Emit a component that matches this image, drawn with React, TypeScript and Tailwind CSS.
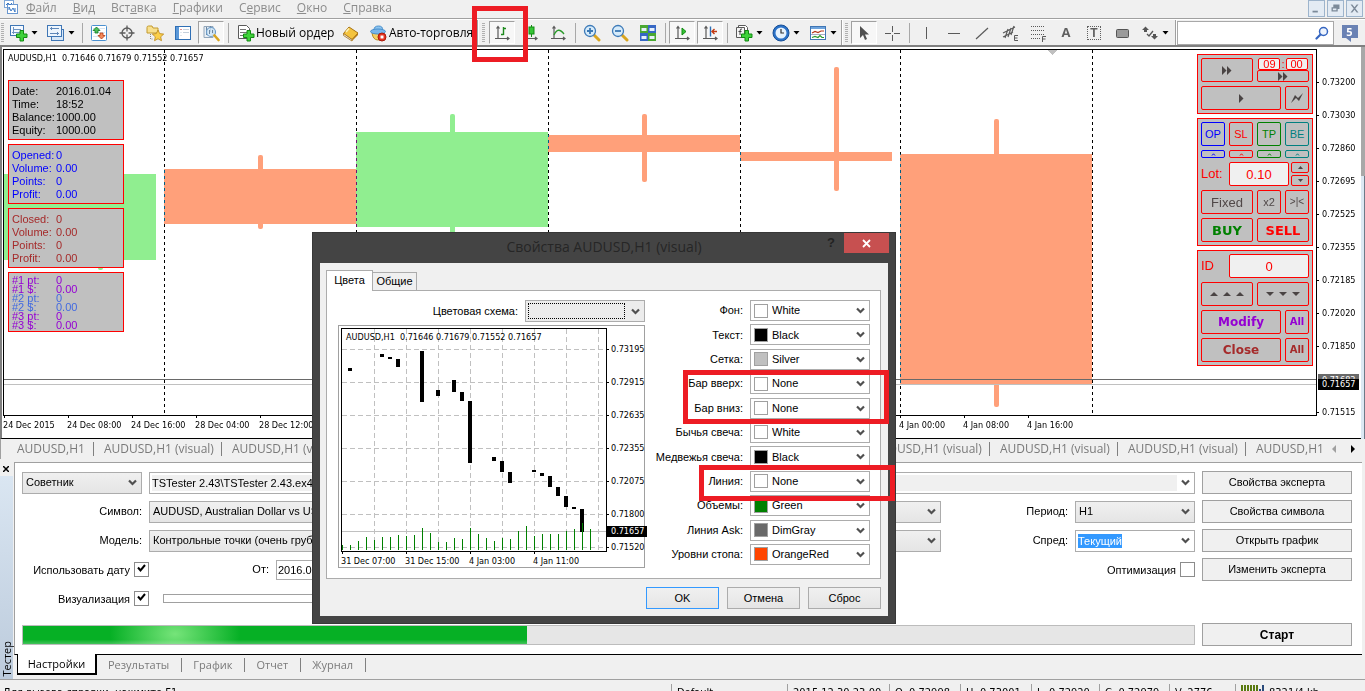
import { useState } from "react";
import type { ReactNode } from "react";
import clsx from "clsx";

const TAHOMA = "font-['DejaVu_Sans_Condensed','DejaVu_Sans',sans-serif]";
const SEGOE = "font-['Open_Sans','Noto_Sans',sans-serif]";
const SANS = "font-['Liberation_Sans',sans-serif]";

/* ---------- small shared pieces ---------- */

function Chevron() {
  return (
    <svg width="9" height="7" viewBox="0 0 9 7" className="pointer-events-none shrink-0">
      <path d="M1 1.500L4.500 5 8 1.500" fill="none" stroke="#505050" strokeWidth="2.200" />
    </svg>
  );
}

function Caret() {
  return (
    <svg width="7" height="4" viewBox="0 0 7 4" className="shrink-0">
      <path d="M0.500 0h6L3.500 3.500Z" fill="#000" />
    </svg>
  );
}

interface ComboProps {
  id: string;
  value: string;
  className?: string;
}

function Combo({ id, value, className }: ComboProps) {
  return (
    <span
      className={clsx(
        "relative flex h-[22px] items-center border border-[#acacac] bg-linear-to-b from-[#f0f0f0] to-[#e5e5e5]",
        className,
      )}
    >
      <select id={id} className="h-full w-full appearance-none truncate bg-transparent pl-[3px] pr-5 outline-none">
        <option>{value}</option>
      </select>
      <span className="pointer-events-none absolute right-1 flex">
        <Chevron />
      </span>
    </span>
  );
}

/* ---------- menu ---------- */

const MENU = [
  ["", "Ф", "айл"],
  ["", "В", "ид"],
  ["Вст", "а", "вка"],
  ["", "Г", "рафики"],
  ["С", "е", "рвис"],
  ["", "О", "кно"],
  ["", "С", "правка"],
];

function MenuBar() {
  return (
    <nav className={`flex h-[19px] shrink-0 items-start border-b border-[#a0a0a0] pl-1 text-[12px] leading-4 text-[#8c8c8c] ${SEGOE}`}>
      <svg width="14" height="14" viewBox="0 0 14 14" className="shrink-0">
        <rect x="0.500" y="0.500" width="9" height="7" fill="#fff" stroke="#7fa6d6" />
        <rect x="3.500" y="4.500" width="10" height="9" fill="#fff" stroke="#6a97cf" />
        <path d="M2 5l2-2 2 2 2-2M5 10V7l2 4 2-3 2 4V8" fill="none" stroke="#3b78c4" />
      </svg>
      {MENU.map(([a, b, c]) => (
        <button key={b + c} className="px-2">
          {a}
          <u>{b}</u>
          {c}
        </button>
      ))}
      <div className="ml-auto flex gap-[2px] pr-[2px]">
        {["M4 11h6v2H4Z", "M6 4h7v5h-2v3H4V7h2ZM5.500 8.500v2h4v-2Z", "M4 4h2l2.500 3L11 4h2l-3.500 4.500L13 13h-2L8.500 10 6 13H4l3.500-4.500Z"].map(
          (d, i) => (
            <button
              key={d}
              aria-label={["Свернуть", "Восстановить", "Закрыть"][i]}
              className="flex h-[17px] w-[17px] items-center justify-center border border-[#9db4cc] bg-[#e3ebf4]"
            >
              <svg width="15" height="15" viewBox="0 0 17 17">
                <path d={d} fill="#7c8a99" fillRule="evenodd" />
              </svg>
            </button>
          ),
        )}
      </div>
    </nav>
  );
}

/* ---------- toolbar ---------- */

function Ico({ children }: { children: ReactNode }) {
  return (
    <svg width="18" height="18" viewBox="0 0 18 18" className="shrink-0">
      {children}
    </svg>
  );
}

function Tool({ label, pressed, children }: { label: string; pressed?: boolean; children: ReactNode }) {
  return (
    <button aria-label={label} title={label} className="flex h-[25px] w-7 shrink-0 items-center justify-center">
      <span
        className={clsx(
          "flex h-[23px] w-[26px] items-center justify-center",
          pressed && "border border-b-white border-l-[#a0a0a0] border-r-white border-t-[#a0a0a0] bg-[#f7f7f7]",
        )}
      >
        {children}
      </span>
    </button>
  );
}

function DropTool({ label, children }: { label: string; children: ReactNode }) {
  return (
    <button aria-label={label} title={label} className="flex h-[25px] w-[37px] shrink-0 items-center gap-[3px] pl-[5px]">
      {children}
      <Caret />
    </button>
  );
}

function Sep() {
  return (
    <span className="flex w-[6px] shrink-0 justify-center">
      <span className="h-5 w-px bg-[#a8a8a8]" />
    </span>
  );
}

function Grip({ className }: { className: string }) {
  return (
    <span className={clsx("flex shrink-0 justify-center", className)}>
      <span className="h-5 w-[3px] bg-[repeating-linear-gradient(to_bottom,#b0b0b0_0_1px,transparent_1px_2px)]" />
    </span>
  );
}

function Axes() {
  return <path d="M5 2.500V14.500M2 14.500H16M3.500 4.500L5 2.500 6.500 4.500M14 13L16 14.500 14 16" fill="none" stroke="#5a5a5a" strokeWidth="1.200" />;
}

function Plus({ x, y }: { x: number; y: number }) {
  return (
    <path
      transform={`translate(${x} ${y})`}
      d="M4 0.500h3.500v3.500h3.500v3.500h-3.500v3.500h-3.500v-3.500h-3.500v-3.500h3.500Z"
      fill="#3fd23a"
      stroke="#128a12"
    />
  );
}

function Magnifier({ plus }: { plus: boolean }) {
  return (
    <Ico>
      <path d="M11 11l5 5" stroke="#d9a520" strokeWidth="3" strokeLinecap="round" />
      <circle cx="7" cy="7" r="5.500" fill="#d6ebfa" stroke="#3d7ab8" strokeWidth="1.300" />
      <path d={plus ? "M4 7h6M7 4v6" : "M4 7h6"} stroke="#3a78b4" strokeWidth="1.800" />
    </Ico>
  );
}

function Toolbar() {
  return (
    <div className={`flex h-7 shrink-0 items-center border-b-2 border-b-[#808080] border-t border-t-white text-[12px] text-black ${SEGOE}`}>
      <Grip className="w-[5px]" />
      <DropTool label="Новый график">
        <Ico>
          <rect x="0.500" y="1.500" width="13" height="10" fill="#f4f9ff" stroke="#3f76b5" />
          <path d="M3.500 3v7M2 8.500h10M3 5.500h8" stroke="#6d94c2" />
          <Plus x={6} y={6} />
        </Ico>
      </DropTool>
      <DropTool label="Профили">
        <Ico>
          <rect x="4.500" y="5.500" width="12" height="11" fill="#d7e7f7" stroke="#3f76b5" />
          <rect x="0.500" y="1.500" width="14" height="11" fill="#edf5fd" stroke="#3f76b5" />
          <path d="M3 4.500h9M4.500 3v3M3 9.500h9M10.500 8v3" stroke="#5f87b8" />
        </Ico>
      </DropTool>
      <Sep />
      <Tool label="Обзор рынка">
        <Ico>
          <rect x="1.500" y="1.500" width="15" height="15" rx="1" fill="#fff" stroke="#4a90d0" />
          <path d="M3 4.500h12M3 8.500h12M3 12.500h12" stroke="#d6e4f0" />
          <path d="M6.500 3l3.500 3.500H8V9H5V6.500H3Z" fill="#4fbf5b" stroke="#0f7a22" strokeWidth="0.800" />
          <path d="M11.500 15l3.500-3.500H13V9h-3v2.500H8Z" fill="#f28a5c" stroke="#b83a12" strokeWidth="0.800" />
        </Ico>
      </Tool>
      <Tool label="Окно данных">
        <Ico>
          <circle cx="9" cy="9" r="5" fill="none" stroke="#5a5a5a" strokeWidth="1.300" />
          <path d="M9 1.500v6M9 10.500v6M1.500 9h6M10.500 9h6" stroke="#5a5a5a" strokeWidth="1.300" />
        </Ico>
      </Tool>
      <Tool label="Навигатор">
        <Ico>
          <path d="M1 3.500q0-1.500 1.500-1.500H6l1 2h5v5H1Z" fill="#f8e08e" stroke="#c39a2e" />
          <path d="M4.500 10v5h3" fill="none" stroke="#888" strokeDasharray="1 1" />
          <path d="M12 6l1.700 3.600 4 .5-3 2.700.8 3.900L12 14.800l-3.500 1.900.8-3.900-3-2.700 4-.5Z" fill="#fbcf4a" stroke="#b9861b" strokeWidth="0.800" />
        </Ico>
      </Tool>
      <Tool label="Терминал">
        <Ico>
          <rect x="1.500" y="2.500" width="15" height="13" fill="#fff" stroke="#2f6fb5" />
          <rect x="2" y="3" width="3" height="12" fill="#5b98d8" />
          <path d="M6.500 5.500h1M9 5.500h6M6.500 8.500h1M9 8.500h6M6.500 11.500h1" stroke="#c4d0dc" />
          <path d="M6.500 5.500h1" stroke="#d33" />
        </Ico>
      </Tool>
      <Tool label="Тестер стратегий" pressed>
        <Ico>
          <path d="M2 2.500h9v11H2Z" fill="#e9eff5" stroke="#92a6ba" />
          <path d="M4.500 3v8M8.500 2v6" stroke="#6c86a0" />
          <circle cx="9" cy="8" r="4.500" fill="#cfe6f8" fillOpacity="0.800" stroke="#6d9cc8" strokeWidth="1.200" />
          <path d="M7.500 6v4M10.500 6v3" stroke="#6c86a0" />
          <path d="M12.500 11.500l4 4.500" stroke="#d9a520" strokeWidth="2.600" strokeLinecap="round" />
        </Ico>
      </Tool>
      <Sep />
      <button className="flex h-[25px] w-[106px] shrink-0 items-center gap-px whitespace-nowrap pl-[6px]">
        <Ico>
          <path d="M1.500 1.500h8l3 3v10h-11Z" fill="#fff" stroke="#5a5a5a" />
          <path d="M3 5.500h6M3 8.500h7M3 11.500h4" stroke="#777" />
          <Plus x={6} y={6} />
        </Ico>
        Новый ордер
      </button>
      <Tool label="MetaEditor">
        <Ico>
          <path d="M1.500 9.500L7 3l9 6-6 6.500Z" fill="#f4c33e" stroke="#a87415" />
          <path d="M1.500 9.500v2L10 17v-1.500Z" fill="#e6e6e6" stroke="#a87415" strokeWidth="0.800" />
          <path d="M10 17l6-6v-2l-6 6.500Z" fill="#b57a14" />
          <path d="M7 4.500L4 8" stroke="#fff3b8" strokeWidth="1.500" />
        </Ico>
      </Tool>
      <button className="flex h-[25px] w-[112px] shrink-0 items-center gap-[2px] whitespace-nowrap pl-1">
        <Ico>
          <path d="M3 9q1 7 6 7t6-7Z" fill="#f5cf62" stroke="#b98a21" />
          <path d="M5 6q0-4 4.500-4t4 4Z" fill="#8cc4f0" stroke="#4a90cc" />
          <ellipse cx="9" cy="7.500" rx="7.500" ry="2.500" fill="#79b6ea" stroke="#4a90cc" />
          <circle cx="13" cy="13" r="4" fill="#e5321e" stroke="#a81c0c" />
          <rect x="11.500" y="11.500" width="3" height="3" fill="#fff" />
        </Ico>
        Авто-торговля
      </button>
      <span className="h-[25px] w-[2px] shrink-0 border-l border-[#a0a0a0] bg-white" />
      <Grip className="w-[9px]" />
      <Tool label="Бары" pressed>
        <Ico>
          <Axes />
          <path d="M10.500 3v8M10.500 4.500h2.500M8 10.500h2.500" stroke="#1d8a1d" strokeWidth="1.400" />
        </Ico>
      </Tool>
      <Tool label="Свечи">
        <Ico>
          <Axes />
          <path d="M10.500 1v12" stroke="#128a12" />
          <rect x="8" y="3" width="5" height="7" fill="#35c435" stroke="#128a12" />
        </Ico>
      </Tool>
      <Tool label="Линия">
        <Ico>
          <Axes />
          <path d="M5 11q4-9 10-1" fill="none" stroke="#2a9a2a" strokeWidth="1.300" />
        </Ico>
      </Tool>
      <Sep />
      <Tool label="Увеличить">
        <Magnifier plus />
      </Tool>
      <Tool label="Уменьшить">
        <Magnifier plus={false} />
      </Tool>
      <Tool label="Расположить окна">
        <Ico>
          <rect x="1" y="1" width="8" height="8" fill="#4aa832" />
          <rect x="9" y="1" width="8" height="8" fill="#3667c4" />
          <rect x="1" y="9" width="8" height="8" fill="#3667c4" />
          <rect x="9" y="9" width="8" height="8" fill="#4aa832" />
          <path d="M2.500 4h5v3h-5ZM10.500 4h5v3h-5ZM2.500 12h5v3h-5ZM10.500 12h5v3h-5Z" fill="#e6f0fb" />
        </Ico>
      </Tool>
      <Sep />
      <Tool label="Автопрокрутка" pressed>
        <Ico>
          <Axes />
          <path d="M9 4l4 3.500L9 11Z" fill="#35c435" stroke="#128a12" />
        </Ico>
      </Tool>
      <Tool label="Сдвиг графика" pressed>
        <Ico>
          <Axes />
          <path d="M9.500 2.500v10" stroke="#2e6fb5" strokeWidth="1.400" />
          <path d="M11 7.500h5M13.500 5L11 7.500l2.500 2.500" fill="none" stroke="#c23a12" strokeWidth="1.400" />
        </Ico>
      </Tool>
      <Sep />
      <DropTool label="Индикаторы">
        <Ico>
          <path d="M3.500 1.500h7l2 2v9h-9Z" fill="#fff" stroke="#5a5a5a" />
          <path d="M1.500 3.500h8v10h-8Z" fill="#f4f4f4" stroke="#5a5a5a" />
          <path d="M7 5q-2-.5-2 2v4M3.500 7.500h3" fill="none" stroke="#444" />
          <Plus x={6} y={6} />
        </Ico>
      </DropTool>
      <DropTool label="Периоды">
        <Ico>
          <circle cx="9" cy="9" r="8" fill="#2b72c8" stroke="#174f96" />
          <circle cx="9" cy="9" r="5.500" fill="#e6f2fd" />
          <path d="M9 5v4h3" fill="none" stroke="#333" strokeWidth="1.200" />
        </Ico>
      </DropTool>
      <DropTool label="Шаблоны">
        <Ico>
          <rect x="1.500" y="2.500" width="15" height="13" fill="#fff" stroke="#3f76b5" />
          <rect x="2" y="3" width="14" height="2" fill="#6ea3dc" />
          <path d="M3 9l3-1.500 3 1 3-1.500h3" fill="none" stroke="#b5371a" strokeWidth="1.200" />
          <path d="M2 10.500h14" stroke="#88a" strokeWidth="0.700" />
          <path d="M3 13.500l3-1 3 1 2-2 2 2h2" fill="none" stroke="#2a9a2a" strokeWidth="1.200" />
        </Ico>
      </DropTool>
      <span className="h-[25px] w-[2px] shrink-0 border-l border-[#a0a0a0] bg-white" />
      <Grip className="w-[7px]" />
      <Tool label="Курсор" pressed>
        <Ico>
          <path d="M5 2v12l3-3 2 5 2-1-2-4.500h4Z" fill="#505050" />
        </Ico>
      </Tool>
      <Tool label="Перекрестие">
        <Ico>
          <path d="M9.500 2v6M9.500 11v6M2 9.500h6M11 9.500h6" stroke="#5a5a5a" />
        </Ico>
      </Tool>
      <Sep />
      <Tool label="Вертикальная линия">
        <Ico>
          <path d="M9.500 3v12" stroke="#5a5a5a" />
        </Ico>
      </Tool>
      <Tool label="Горизонтальная линия">
        <Ico>
          <path d="M3 9.500h12" stroke="#5a5a5a" />
        </Ico>
      </Tool>
      <Tool label="Трендовая линия">
        <Ico>
          <path d="M3 15L15 4" stroke="#5a5a5a" strokeWidth="1.200" />
        </Ico>
      </Tool>
      <Tool label="Канал">
        <Ico>
          <path d="M2 9L14 3M2 13l10-5M4 14L7 5M7 13l3-9M10 11l3-9" stroke="#5a5a5a" strokeWidth="1.200" />
          <path d="M17 11.500h-3.500v5H17M13.500 14H16.500" fill="none" stroke="#5a5a5a" />
        </Ico>
      </Tool>
      <Tool label="Фибоначчи">
        <Ico>
          <path d="M2 2.500h14M2 6.500h14M2 10.500h14M2 14.500h9" stroke="#5a5a5a" strokeDasharray="1 1" />
          <path d="M17 12.500h-3.500V18M13.500 15H16.500" fill="none" stroke="#5a5a5a" />
        </Ico>
      </Tool>
      <Tool label="Текст">
        <span className="text-[13px] font-bold leading-none text-[#606060]">A</span>
      </Tool>
      <Tool label="Метка">
        <span className="flex h-[14px] w-[14px] items-center justify-center border border-dotted border-[#606060] font-['Liberation_Sans',sans-serif] text-[12px] font-bold leading-none text-[#606060]">
          T
        </span>
      </Tool>
      <Tool label="Прямоугольник">
        <Ico>
          <rect x="3.500" y="5.500" width="12" height="8" rx="1" fill="#9a9a9a" stroke="#555" />
        </Ico>
      </Tool>
      <DropTool label="Стрелки">
        <Ico>
          <path d="M1 6l3.500-3.500L8 6H6v2H3V6ZM10 12h2v-2h3v2h2l-3.500 3.500Z" fill="#555" />
          <path d="M6 10l2 2 4-5" fill="none" stroke="#555" strokeWidth="1.300" />
        </Ico>
      </DropTool>
      <span className="ml-[2px] h-[25px] w-[2px] shrink-0 border-l border-[#a0a0a0] bg-white" />
      <label className="flex h-6 min-w-0 flex-1 items-center border border-[#a8a8a8] bg-white">
        <input aria-label="Поиск" className="h-full min-w-0 flex-1 outline-none" />
        <svg width="14" height="14" viewBox="0 0 14 14" className="mr-1 shrink-0">
          <circle cx="8.500" cy="5.500" r="4" fill="#eef4fd" stroke="#3565c0" strokeWidth="1.500" />
          <path d="M5.500 8.500L1.500 12.500" stroke="#3565c0" strokeWidth="2.200" strokeLinecap="round" />
        </svg>
      </label>
      <button aria-label="Сообщения" className="flex h-6 w-[31px] shrink-0 items-start justify-center pt-1">
        <span className="relative h-[13px] w-4 bg-[#6a82b4] text-center text-[11px] font-bold leading-[13px] text-white">
          5
          <svg width="5" height="4" viewBox="0 0 5 4" className="absolute left-1 top-[13px]">
            <path d="M0 0h5v4Z" fill="#6a82b4" />
          </svg>
        </span>
      </button>
    </div>
  );
}

/* ---------- main chart ---------- */

const GREEN = "#90ee90";
const SALMON = "#ffa07a";

// x, width, body top, body bottom, wick x, wick top, wick bottom
const CANDLES: [number, number, number, number, number, number, number, string][] = [
  [0, 156, 174, 260, 98, 174, 270, GREEN],
  [164, 192, 169, 224, 258, 155, 229, SALMON],
  [356, 192, 132, 227, 450, 114, 240, GREEN],
  [548, 192, 135, 152, 642, 114, 182, SALMON],
  [740, 152, 152, 161, 834, 67, 191, SALMON],
  [900, 192, 154, 384, 994, 119, 407, SALMON],
];

const DAY_LINES = [164, 356, 548, 740, 900, 1092];

const TIMES = [
  "24 Dec 2015", "24 Dec 08:00", "24 Dec 16:00", "28 Dec 04:00", "28 Dec 12:00", "28 Dec 20:00",
  "29 Dec 04:00", "29 Dec 12:00", "29 Dec 20:00", "30 Dec 04:00", "30 Dec 12:00", "30 Dec 20:00",
  "31 Dec 04:00", "31 Dec 12:00", "4 Jan 00:00", "4 Jan 08:00", "4 Jan 16:00",
];

const PRICES = ["0.73200", "0.73030", "0.72860", "0.72695", "0.72525", "0.72355", "0.72185", "0.72020", "0.71850", "", "0.71515"];

function InfoBox({ rows, color, dense }: { rows: [string, string, string?][]; color: string; dense?: boolean }) {
  return (
    <dl
      className={clsx(
        "h-[60px] w-[116px] border border-[red] bg-[#c0c0c0] pl-[3px] text-[11px]",
        dense ? "pt-[3px] leading-[9px]" : "pt-1 leading-[13px]",
        color,
      )}
    >
      {rows.map(([label, value, tone], i) => (
        <div key={i} className={clsx("flex", tone)}>
          <dt className="w-11 shrink-0 whitespace-nowrap">{label}</dt>
          <dd>{value}</dd>
        </div>
      ))}
    </dl>
  );
}

function Btn({ children, className, label }: { children: ReactNode; className?: string; label?: string }) {
  return (
    <button
      aria-label={label}
      className={clsx("flex shrink-0 items-center justify-center whitespace-nowrap rounded-[2px] border leading-none", className)}
    >
      {children}
    </button>
  );
}

function Tri({ d, w = 9, h = 9 }: { d: string; w?: number; h?: number }) {
  return (
    <svg width={w} height={h} viewBox={`0 0 ${w} ${h}`}>
      <path d={d} fill="#4a4444" />
    </svg>
  );
}

function Hat() {
  return (
    <svg width="5" height="3" viewBox="0 0 5 3">
      <path d="M1 2.500L2.500 0.800 4 2.500" fill="none" stroke="currentColor" />
    </svg>
  );
}

const FF = "M0 0l4.500 4.500L0 9ZM5 0l4.500 4.500L5 9Z";
const UP = "M0 4L4 0l4 4Z";
const DOWN = "M0 0h8L4 4Z";

function TradePanel() {
  const box = "flex w-[116px] flex-col gap-1 border border-[red] bg-[#c0c0c0] p-[3px]";
  return (
    <div className={`absolute right-[3px] top-1 flex flex-col gap-1 text-[red] ${SANS}`}>
      <div className={box}>
        <div className="flex gap-1">
          <Btn label="Быстрее" className="h-6 w-[52px] border-[red]">
            <Tri d={FF} w={10} />
          </Btn>
          <div className="flex w-[52px] flex-col">
            <div className="flex h-3 items-center justify-center gap-px text-[11px] leading-none">
              <input aria-label="Часы" defaultValue="09" className="h-3 w-[22px] rounded-[2px] border border-[red] bg-[#f0f0f0] text-center" />
              <span>:</span>
              <input aria-label="Минуты" defaultValue="00" className="h-3 w-[22px] rounded-[2px] border border-[red] bg-[#f0f0f0] text-center" />
            </div>
            <Btn label="До времени" className="h-3 border-[red]">
              <Tri d={FF} w={10} />
            </Btn>
          </div>
        </div>
        <div className="flex gap-1">
          <Btn label="Пуск" className="h-6 w-20 border-[red]">
            <Tri d="M0 0l4.500 4.500L0 9Z" w={5} />
          </Btn>
          <Btn label="Тик" className="h-6 w-6 border-[red]">
            <Tri d="M0 10L4 2l3 3L12 0 8 8 5 5Z" w={12} h={10} />
          </Btn>
        </div>
      </div>

      <div className={box}>
        <div className="flex gap-1 text-[11px]">
          <Btn className="h-6 w-6 border-[blue] text-[blue]">OP</Btn>
          <Btn className="h-6 w-6 border-[red] text-[red]">SL</Btn>
          <Btn className="h-6 w-6 border-[green] text-[green]">TP</Btn>
          <Btn className="h-6 w-6 border-[teal] text-[teal]">BE</Btn>
        </div>
        <div className="flex gap-1">
          <Btn label="OP вверх" className="h-2 w-6 border-[blue] text-[blue]"><Hat /></Btn>
          <Btn label="SL вверх" className="h-2 w-6 border-[red] text-[red]"><Hat /></Btn>
          <Btn label="TP вверх" className="h-2 w-6 border-[green] text-[green]"><Hat /></Btn>
          <Btn label="BE вверх" className="h-2 w-6 border-[teal] text-[teal]"><Hat /></Btn>
        </div>
        <div className="flex h-6 items-center">
          <label htmlFor="lot" className="w-7 text-[13px]">Lot:</label>
          <input id="lot" defaultValue="0.10" className="h-6 w-[60px] rounded-[2px] border border-[red] bg-[#f0f0f0] text-center text-[13px]" />
          <div className="ml-auto flex flex-col gap-[2px]">
            <Btn label="Больше" className="h-[11px] w-[18px] border-[red]">
              <Tri d="M0 3L2.500 0 5 3Z" w={5} h={3} />
            </Btn>
            <Btn label="Меньше" className="h-[11px] w-[18px] border-[red]">
              <Tri d="M0 0h5L2.500 3Z" w={5} h={3} />
            </Btn>
          </div>
        </div>
        <div className="flex gap-1 text-[#504848]">
          <Btn className="h-6 w-[52px] border-[red] text-[13px]">Fixed</Btn>
          <Btn className="h-6 w-6 border-[red] text-[11px]">x2</Btn>
          <Btn className="h-6 w-6 border-[red] text-[10px]">&gt;|&lt;</Btn>
        </div>
        <div className="flex gap-1 font-['DejaVu_Sans',sans-serif] text-[13px] font-bold">
          <Btn className="h-6 w-[52px] border-[red] text-[green]">BUY</Btn>
          <Btn className="h-6 w-[52px] border-[red] text-[red]">SELL</Btn>
        </div>
      </div>

      <div className={box}>
        <div className="flex items-center">
          <label htmlFor="order-id" className="w-7 text-[13px]">ID</label>
          <input id="order-id" defaultValue="0" className="h-6 w-20 rounded-[2px] border border-[red] bg-[#f0f0f0] text-center text-[13px]" />
        </div>
        <div className="flex gap-1">
          <Btn label="Вверх" className="h-6 w-[52px] gap-[5px] border-[red]">
            {[0, 1, 2].map((i) => <Tri key={i} d={UP} w={8} h={4} />)}
          </Btn>
          <Btn label="Вниз" className="h-6 w-[52px] gap-[5px] border-[red]">
            {[0, 1, 2].map((i) => <Tri key={i} d={DOWN} w={8} h={4} />)}
          </Btn>
        </div>
        <div className="flex gap-1 font-['DejaVu_Sans',sans-serif] font-bold text-[#9400d3]">
          <Btn className="h-6 w-20 border-[red] text-[12px]">Modify</Btn>
          <Btn className="h-6 w-6 border-[red] text-[10px]">All</Btn>
        </div>
        <div className="flex gap-1 font-['DejaVu_Sans',sans-serif] font-bold text-[brown]">
          <Btn className="h-6 w-20 border-[red] text-[12px]">Close</Btn>
          <Btn className="h-6 w-6 border-[red] text-[10px]">All</Btn>
        </div>
      </div>
    </div>
  );
}

function Chart() {
  return (
    <div className="flex h-[392px] shrink-0">
      <section className="flex min-w-0 flex-1 flex-col border-b border-l-2 border-b-black border-l-[#808080] bg-white pl-px pt-[2px]">
        <div className="flex h-[367px]">
          <div className="relative min-w-0 flex-1 overflow-hidden border border-black">
            <svg width="100%" height="100%" className="absolute inset-0" shapeRendering="crispEdges">
              <rect width="100%" height="100%" fill="#fff" />
              <g transform="translate(-4 -50)">
                {CANDLES.map(([x, w, top, bottom, wx, wTop, wBottom, fill]) => (
                  <g key={x} fill={fill}>
                    <rect x={x} y={top} width={w} height={bottom - top} />
                    <rect x={wx} y={wTop} width="5" height={wBottom - wTop} rx="2" shapeRendering="auto" />
                  </g>
                ))}
                <path d="M1047 50h10l-5 5Z" fill="#c0c0c0" />
                <path d="M0 379.500H1400" stroke="#696969" />
                <path d="M0 384.500H1400" stroke="#c0c0c0" />
                {DAY_LINES.map((x) => (
                  <path key={x} d={`M${x}.5 50V415`} stroke="#fff" strokeDasharray="3 3" className="mix-blend-difference" />
                ))}
              </g>
            </svg>
            <p className={`absolute left-1 top-px text-[9px] leading-[14px] ${TAHOMA}`}>
              AUDUSD,H1&nbsp; 0.71646 0.71679 0.71552 0.71657
            </p>
            <div className={`absolute left-1 top-[30px] flex flex-col gap-1 ${SANS}`}>
              <InfoBox
                color="text-black"
                rows={[["Date:", "2016.01.04"], ["Time:", "18:52"], ["Balance:", "1000.00"], ["Equity:", "1000.00"]]}
              />
              <InfoBox
                color="text-[blue]"
                rows={[["Opened:", "0"], ["Volume:", "0.00"], ["Points:", "0"], ["Profit:", "0.00"]]}
              />
              <InfoBox
                color="text-[brown]"
                rows={[["Closed:", "0"], ["Volume:", "0.00"], ["Points:", "0"], ["Profit:", "0.00"]]}
              />
              <InfoBox
                dense
                color="text-[#9400d3]"
                rows={[
                  ["#1 pt:", "0"],
                  ["#1 $:", "0.00"],
                  ["#2 pt:", "0", "text-[#4169e1]"],
                  ["#2 $:", "0.00", "text-[#4169e1]"],
                  ["#3 pt:", "0"],
                  ["#3 $:", "0.00"],
                ]}
              />
            </div>
            <TradePanel />
          </div>
          <div className={`relative w-11 shrink-0 pt-[17px] text-[9px] ${TAHOMA}`}>
            {PRICES.map((p, i) => (
              <div key={i} className="flex h-[33px] items-center gap-[3px]">
                {p && <span className="h-px w-[2px] bg-black" />}
                {p}
              </div>
            ))}
            <span className="absolute left-px right-[2px] top-[325px] h-3 bg-[#696969] pl-1 leading-3 text-white">0.71683</span>
            <span className="absolute left-px right-[2px] top-[330px] h-[11px] bg-black pl-1 leading-[11px] text-white">0.71657</span>
          </div>
        </div>
        <div className={`flex flex-1 overflow-hidden text-[9px] leading-[14px] ${TAHOMA}`}>
          {TIMES.map((t) => (
            <div key={t} className="w-16 shrink-0 whitespace-nowrap">
              <div className="ml-px h-[2px] w-px bg-black" />
              {t}
            </div>
          ))}
        </div>
      </section>
      <div className="flex w-1 shrink-0 flex-col">
        <div className="h-[129px] bg-[#a8a8a8]" />
        <div className="flex-1 border-r border-[#6d7a88] bg-[#dce8f3]" />
      </div>
    </div>
  );
}

function ChartTabs() {
  return (
    <div className={`flex h-5 shrink-0 items-center border-l border-[#a0a0a0] text-[12px] text-[#7a7a7a] ${SEGOE}`}>
      <div className="flex min-w-0 flex-1 overflow-hidden">
        <button className="w-[93px] shrink-0 border-r border-[#808080] pl-4 text-left leading-[14px]">AUDUSD,H1</button>
        {Array.from({ length: 10 }, (_, i) => (
          <button key={i} className="w-32 shrink-0 whitespace-nowrap border-r border-[#808080] pl-[10px] text-left leading-[14px]">
            AUDUSD,H1 (visual)
          </button>
        ))}
      </div>
      <button aria-label="Назад" className="flex w-[14px] justify-center">
        <svg width="4" height="8" viewBox="0 0 4 8"><path d="M4 0v8L0 4Z" fill="#a0a0a0" /></svg>
      </button>
      <button aria-label="Вперёд" className="flex w-6 justify-center">
        <svg width="4" height="8" viewBox="0 0 4 8"><path d="M0 0v8l4-4Z" fill="#000" /></svg>
      </button>
    </div>
  );
}

/* ---------- strategy tester ---------- */

function Check({ id, label, on }: { id: string; label: string; on: boolean }) {
  const [checked, setChecked] = useState(on);
  return (
    <div className="flex items-end gap-1 whitespace-nowrap leading-[13px]">
      <label htmlFor={id}>{label}</label>
      <span className="relative flex h-[15px] w-[15px] shrink-0">
        <input
          id={id}
          type="checkbox"
          checked={checked}
          onChange={(e) => setChecked(e.target.checked)}
          className="h-full w-full appearance-none border border-[#8c8c8c] bg-white"
        />
        {checked && (
          <svg width="9" height="9" viewBox="0 0 9 9" className="pointer-events-none absolute left-[3px] top-[2px]">
            <path d="M1 3.500l2.500 3L8 1" fill="none" stroke="#000" strokeWidth="2" />
          </svg>
        )}
      </span>
    </div>
  );
}

function SideButton({ children, className }: { children: ReactNode; className?: string }) {
  return (
    <button className={clsx("h-[23px] w-[150px] shrink-0 border border-[#a0a0a0] bg-[#f0f0f0]", className)}>{children}</button>
  );
}

const BOTTOM_TABS = ["Результаты", "График", "Отчет", "Журнал"];

function Tester() {
  return (
    <div className="flex h-[220px] shrink-0 pt-[3px]">
      <aside className="flex w-[14px] shrink-0 flex-col">
        <button aria-label="Закрыть" className="flex h-[14px] items-center justify-center pr-[2px]">
          <svg width="6" height="6" viewBox="0 0 6 6"><path d="M0 0l6 6M6 0L0 6" stroke="#000" strokeWidth="1.500" /></svg>
        </button>
        <div className="flex w-[13px] flex-1 items-end justify-center bg-linear-to-b from-[#dae6f2] to-[#bccbdc] pb-[2px]">
          <span className={`rotate-180 text-[11px] leading-[13px] [writing-mode:vertical-rl] ${SEGOE}`}>Тестер</span>
        </div>
      </aside>
      <div className="flex min-w-0 flex-1 flex-col">
        <div className={`mr-[3px] flex h-[193px] flex-col gap-[6px] border-b border-l border-t border-b-black border-l-[#a0a0a0] border-t-[#a0a0a0] bg-white pl-[7px] pr-[10px] pt-2 text-[11px] ${SANS}`}>
          <div className="flex h-[23px] items-center gap-[7px]">
            <Combo id="kind" value="Советник" className="w-[120px] shrink-0" />
            <span className="relative flex h-[22px] flex-1 items-center border border-[#acacac] bg-white p-[2px]">
              <select aria-label="Файл советника" className="h-full min-w-0 flex-1 appearance-none bg-[#f0f0f0] outline-none">
                <option>TSTester 2.43\TSTester 2.43.ex4</option>
              </select>
              <span className="flex w-[15px] justify-end pr-[2px]">
                <Chevron />
              </span>
            </span>
            <SideButton>Свойства эксперта</SideButton>
          </div>
          <div className="flex h-[23px] items-center gap-[7px]">
            <label htmlFor="symbol" className="w-[120px] shrink-0 text-right">Символ:</label>
            <Combo id="symbol" value="AUDUSD, Australian Dollar vs US Dollar" className="min-w-0 flex-1" />
            <label htmlFor="period" className="w-[120px] shrink-0 text-right">Период:</label>
            <Combo id="period" value="H1" className="w-[120px] shrink-0" />
            <SideButton>Свойства символа</SideButton>
          </div>
          <div className="flex h-[23px] items-center gap-[7px]">
            <label htmlFor="model" className="w-[120px] shrink-0 text-right">Модель:</label>
            <Combo id="model" value="Контрольные точки (очень грубый метод, результаты нельзя принимать во внимание)" className="min-w-0 flex-1" />
            <label htmlFor="spread" className="w-[120px] shrink-0 text-right">Спред:</label>
            <span className="flex h-[22px] w-[120px] shrink-0 items-center justify-between border border-[#acacac] bg-white px-[2px]">
              <select id="spread" className="h-[14px] appearance-none bg-[#3399ff] leading-[14px] text-white outline-none">
                <option>Текущий</option>
              </select>
              <span className="pr-[2px]">
                <Chevron />
              </span>
            </span>
            <SideButton>Открыть график</SideButton>
          </div>
          <div className="flex h-[23px] items-center">
            <div className="flex w-[127px] shrink-0 justify-end">
              <Check id="use-date" label="Использовать дату" on />
            </div>
            <label htmlFor="from" className="w-[120px] shrink-0 text-right">От:</label>
            <input id="from" defaultValue="2016.01.01" className="ml-[7px] h-5 w-[100px] border border-[#acacac] px-px" />
            <div className="ml-auto mr-[7px]">
              <Check id="optimize" label="Оптимизация" on={false} />
            </div>
            <SideButton>Изменить эксперта</SideButton>
          </div>
          <div className="flex h-[23px] items-center">
            <div className="flex w-[127px] shrink-0 justify-end">
              <Check id="visual" label="Визуализация" on />
            </div>
            <input aria-label="Скорость" type="range" className="ml-[14px] h-[9px] w-[400px] appearance-none border border-[#a0a0a0] bg-white [&::-webkit-slider-thumb]:appearance-none" />
          </div>
          <div className="mt-[7px] flex h-[23px] items-center gap-[7px]">
            <div role="progressbar" aria-valuenow={43} className="h-5 flex-1 border border-[#bcbcbc] bg-[#e6e6e6]">
              <div className="h-full w-[43%] bg-[radial-gradient(ellipse_65px_40px_at_152px_8px,#76e47a,#06b025)]">
                <div className="h-full bg-linear-to-b from-transparent from-75% to-white/25" />
              </div>
            </div>
            <SideButton className="text-[12px] font-bold">Старт</SideButton>
          </div>
        </div>
        <div className={`ml-[3px] flex h-5 text-[#7a7a7a] ${SEGOE}`}>
          <button className="-mt-px h-[21px] w-20 shrink-0 border-b-2 border-l border-r-2 border-black bg-white text-[11px] leading-[18px] text-black">
            Настройки
          </button>
          <div className="flex items-center text-[11px]">
            {BOTTOM_TABS.map((t) => (
              <button key={t} className="border-r border-[#808080] pl-[11px] pr-3 leading-[14px]">{t}</button>
            ))}
          </div>
        </div>
      </div>
    </div>
  );
}

const QUOTES: [string, string][] = [
  ["w-[116px]", "Default"],
  ["w-[102px]", "2015.12.30 23:00"],
  ["w-[71px]", "O: 0.72998"],
  ["w-[71px]", "H: 0.73001"],
  ["w-[68px]", "L: 0.72920"],
  ["w-[70px]", "C: 0.72979"],
  ["w-[66px]", "V: 2776"],
];

function StatusBar() {
  return (
    <footer className={`flex shrink-0 items-start border-t border-[#a0a0a0] pl-[3px] pt-1 text-[11px] leading-[18px] ${TAHOMA}`}>
      <span className="flex-1">Для вызова справки, нажмите F1</span>
      {QUOTES.map(([w, text]) => (
        <span key={text} className={clsx("shrink-0 whitespace-nowrap border-l border-[#a0a0a0] pl-[5px]", w)}>{text}</span>
      ))}
      <span className="flex w-[130px] shrink-0 items-start gap-1 border-l border-[#a0a0a0] pl-[5px]">
        <svg width="24" height="12" viewBox="0 0 24 12" shapeRendering="crispEdges" className="mt-px">
          <path d="M1 0v12M4 0v12M7 0v12M10 0v12M13 0v12M16 0v12" stroke="#5a7a10" strokeWidth="2" />
          <path d="M19 4v8M22 0v12" stroke="#2a4a7a" strokeWidth="2" />
        </svg>
        8321/4 kb
      </span>
    </footer>
  );
}

/* ---------- properties dialog ---------- */

const COLORS: [string, string, string][] = [
  ["Фон:", "White", "bg-white"],
  ["Текст:", "Black", "bg-black"],
  ["Сетка:", "Silver", "bg-[silver]"],
  ["Бар вверх:", "None", "bg-white"],
  ["Бар вниз:", "None", "bg-white"],
  ["Бычья свеча:", "White", "bg-white"],
  ["Медвежья свеча:", "Black", "bg-black"],
  ["Линия:", "None", "bg-white"],
  ["Объемы:", "Green", "bg-[green]"],
  ["Линия Ask:", "DimGray", "bg-[dimgray]"],
  ["Уровни стопа:", "OrangeRed", "bg-[orangered]"],
];

// x, top, height
const BARS: [number, number, number][] = [
  [348, 368, 3], [380, 354, 3], [388, 357, 2], [396, 359, 8], [420, 351, 51], [436, 390, 6],
  [452, 380, 12], [460, 392, 9], [468, 401, 62], [492, 457, 4], [500, 461, 11], [508, 472, 11],
  [532, 470, 2], [540, 473, 3], [548, 476, 11], [556, 487, 9], [564, 496, 11], [572, 507, 2], [580, 509, 23],
];

const VOLUMES = [5, 5, 9, 13, 10, 13, 13, 15, 14, 15, 22, 17, 8, 8, 12, 11, 22, 16, 12, 9, 12, 11, 19, 24, 14, 16, 16, 16, 19, 21, 27, 21];

function Preview() {
  return (
    <div className={`h-[243px] w-[307px] border border-[#a0a0a0] pl-[2px] pt-[2px] text-[9px] ${TAHOMA}`}>
      <div className="flex h-[224px]">
        <div className="relative w-[266px] shrink-0 border border-black">
          <svg width="264" height="222" viewBox="342 329 264 222" shapeRendering="crispEdges">
            <g stroke="#c0c0c0" strokeDasharray="5 3">
              {[374, 406, 438, 470, 502, 534, 566, 598].map((x) => <path key={x} d={`M${x}.5 329V551`} />)}
              {[349, 382, 415, 448, 481, 514, 547].map((y) => <path key={y} d={`M342 ${y}.5H606`} />)}
            </g>
            <path d="M342 531.500H606" stroke="#c0c0c0" />
            {BARS.map(([x, y, h]) => <rect key={x} x={x} y={y} width="4" height={h} />)}
            {VOLUMES.map((v, i) => <rect key={i} x={342 + i * 8} y={550 - v} width="1" height={v} fill="#008000" />)}
          </svg>
          <p className="absolute left-1 top-px whitespace-nowrap leading-[14px]">AUDUSD,H1&nbsp; 0.71646 0.71679 0.71552 0.71657</p>
        </div>
        <div className="relative flex-1 pt-[5px]">
          {["0.73195", "0.72915", "0.72635", "0.72355", "0.72075", "0.71800", "0.71520"].map((p) => (
            <div key={p} className="flex h-[33px] items-center gap-[2px]">
              <span className="h-px w-[2px] bg-black" />
              {p}
            </div>
          ))}
          <span className="absolute left-0 top-[198px] h-[11px] w-10 bg-black pl-1 leading-[11px] text-white">0.71657</span>
        </div>
      </div>
      <div className="flex leading-[14px]">
        {["31 Dec 07:00", "31 Dec 15:00", "4 Jan 03:00", "4 Jan 11:00"].map((t) => (
          <div key={t} className="w-16 shrink-0 whitespace-nowrap">
            <div className="ml-px h-[2px] w-px bg-black" />
            {t}
          </div>
        ))}
      </div>
    </div>
  );
}

function Dialog() {
  const btn = "h-[22px] w-[73px] border bg-linear-to-b from-[#f0f0f0] to-[#e5e5e5]";
  return (
    <div
      role="dialog"
      aria-labelledby="dlg-title"
      className={`absolute left-[312px] top-[232px] w-[584px] border border-[#383838] bg-[#444] px-[7px] pb-[7px] text-[11px] ${SANS}`}
    >
      <header className="relative h-[30px]">
        <h1 id="dlg-title" className={`pt-[3px] text-center text-[14px] leading-[22px] text-[#262626] ${SEGOE}`}>
          Свойства AUDUSD,H1 (visual)
        </h1>
        <div className="absolute -right-px top-0 flex items-center">
          <button aria-label="Справка" className="mr-[9px] text-[13px] font-bold text-[#222]">?</button>
          <button aria-label="Закрыть" className="flex h-5 w-[45px] items-center justify-center bg-[#c75050]">
            <svg width="9" height="9" viewBox="0 0 9 9"><path d="M1 1l7 7M8 1L1 8" stroke="#fff" strokeWidth="1.800" /></svg>
          </button>
        </div>
      </header>
      <div className="bg-[#f0f0f0] pb-[7px] pl-[6px] pr-[7px] pt-[7px]">
        <div className="flex items-end">
          <button className="relative -mb-px h-[21px] w-[47px] border border-b-0 border-[#acacac] bg-white pb-[2px]">Цвета</button>
          <button className="h-[18px] w-11 border border-b-0 border-l-0 border-[#acacac] bg-[#f0f0f0]">Общие</button>
        </div>
        <div className="flex h-[289px] border border-[#acacac] bg-white pl-[11px] pr-[10px] pt-[9px]">
          <div className="flex flex-col gap-[3px]">
            <div className="flex items-center justify-end gap-[7px]">
              <label htmlFor="scheme">Цветовая схема:</label>
              <span className="relative flex h-[22px] w-[120px] items-center border border-[#acacac] bg-[#ececec] p-[2px]">
                <select id="scheme" className="h-full w-[97px] appearance-none border border-dotted border-black outline-none">
                  <option></option>
                </select>
                <span className="absolute right-1 flex"><Chevron /></span>
              </span>
            </div>
            <Preview />
          </div>
          <div className="flex h-[265px] flex-1 flex-col justify-between">
            {COLORS.map(([label, value, swatch]) => (
              <div key={label} className="flex items-center justify-end gap-[7px]">
                <label htmlFor={`c-${label}`}>{label}</label>
                <span className="relative flex h-[21px] w-[120px] items-center border border-[#acacac] bg-white pl-[3px]">
                  <span className={clsx("h-[14px] w-[14px] shrink-0 border border-[#a0a0a0]", swatch)} />
                  <select id={`c-${label}`} className="h-full w-full appearance-none bg-transparent pl-1 outline-none">
                    <option>{value}</option>
                  </select>
                  <span className="pointer-events-none absolute right-1 flex"><Chevron /></span>
                </span>
              </div>
            ))}
          </div>
        </div>
        <div className="flex justify-end gap-2 pt-2">
          <button className={`${btn} border-[#3399ff]`}>OK</button>
          <button className={`${btn} border-[#acacac]`}>Отмена</button>
          <button className={`${btn} border-[#acacac]`}>Сброс</button>
        </div>
      </div>
      <Mark className="left-[370px] top-[137px] h-[54px] w-[206px]" />
      <Mark className="left-[386px] top-[232px] h-9 w-[196px]" />
    </div>
  );
}

function Mark({ className }: { className: string }) {
  return <div className={clsx("pointer-events-none absolute border-[5px] border-[#ed1c24]", className)} />;
}

export default function App() {
  return (
    <div className="relative flex h-screen flex-col overflow-hidden bg-[#f0f0f0] text-black">
      <MenuBar />
      <Toolbar />
      <Chart />
      <ChartTabs />
      <Tester />
      <StatusBar />
      <Dialog />
      <Mark className="left-[472px] top-[6px] h-14 w-14" />
    </div>
  );
}
